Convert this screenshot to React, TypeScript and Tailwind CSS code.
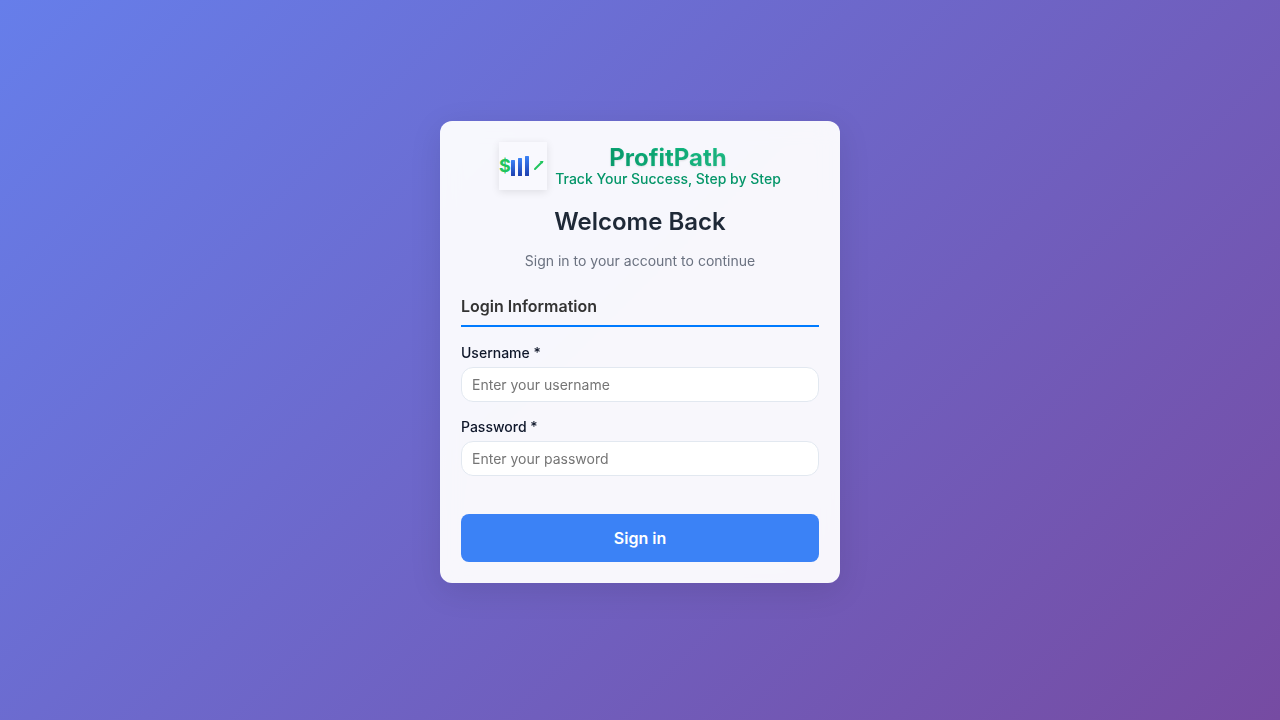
function Logo() {
  return (
    <svg
      className="size-12 shrink-0 shadow-[0_2px_8px_rgba(0,0,0,0.1)]"
      viewBox="0 0 48 48"
      aria-hidden="true"
    >
      <defs>
        <linearGradient id="bar" x1="0" y1="0" x2="0" y2="1">
          <stop offset="0" stopColor="#3b82f6" />
          <stop offset="1" stopColor="#1e40af" />
        </linearGradient>
      </defs>
      <rect width="48" height="48" fill="#f9f9fe" />
      <text x="0" y="30" fontSize="18" fontWeight="700" fill="#22c55e" className="font-['Inter',sans-serif]">
        $
      </text>
      <rect x="12" y="18" width="4" height="16" rx="0.5" fill="url(#bar)" />
      <rect x="19" y="16" width="4" height="18" rx="0.5" fill="url(#bar)" />
      <rect x="26" y="14" width="4" height="20" rx="0.5" fill="url(#bar)" />
      <path d="M36 27 L43 20" stroke="#22c55e" strokeWidth="2" strokeLinecap="round" fill="none" />
      <path d="M40.5 19 L44.5 19 L43.5 21.5 Z" fill="#22c55e" />
    </svg>
  );
}

type FieldProps = {
  id: string;
  label: string;
  type: string;
  placeholder: string;
};

function Field({ id, label, type, placeholder }: FieldProps) {
  return (
    <div className="flex flex-col gap-1">
      <label htmlFor={id} className="text-sm leading-5 font-medium text-[#0f172a]">
        {label} *
      </label>
      <input
        id={id}
        name={id}
        type={type}
        placeholder={placeholder}
        className="h-[35px] w-full rounded-xl border border-[#e2e8f0] bg-white px-2.5 text-sm text-[#0f172a] outline-none placeholder:text-[#757575] focus:border-[#3b82f6]"
      />
    </div>
  );
}

export default function App() {
  return (
    <main className="flex min-h-screen items-center justify-center bg-[linear-gradient(135deg,#667eea_0%,#764ba2_100%)] px-4 pb-4 font-['Inter',sans-serif]">
      <section className="w-full max-w-[400px] rounded-xl bg-white/95 p-[21px] shadow-[0_8px_32px_rgba(0,0,0,0.1)] backdrop-blur-[10px]">
        <header className="flex flex-col items-center text-center">
          <div className="flex items-center gap-2">
            <Logo />
            <div>
              <div className="bg-[linear-gradient(135deg,#059669_0%,#10b981_50%,#34d399_100%)] bg-clip-text text-2xl leading-[26px] font-bold text-transparent [text-shadow:0_1px_2px_rgba(0,0,0,0.1)]">
                ProfitPath
              </div>
              <div className="text-sm leading-4 font-medium text-[#059669]">
                Track Your Success, Step by Step
              </div>
            </div>
          </div>
          <h1 className="mt-4 text-2xl leading-8 font-semibold text-[#1f2937]">Welcome Back</h1>
          <p className="mt-3 text-sm leading-[22px] text-[#6b7280]">Sign in to your account to continue</p>
        </header>
        <form className="mt-[22px]" onSubmit={(event) => event.preventDefault()}>
          <h2 className="border-b-2 border-[#007bff] pb-[7px] text-base leading-6 font-semibold text-[#333333]">
            Login Information
          </h2>
          <div className="mt-4 flex flex-col gap-[15px]">
            <Field id="username" label="Username" type="text" placeholder="Enter your username" />
            <Field id="password" label="Password" type="password" placeholder="Enter your password" />
          </div>
          <button
            type="submit"
            className="mt-[38px] h-12 w-full rounded-lg bg-[#3b82f6] text-base font-semibold text-white"
          >
            Sign in
          </button>
        </form>
      </section>
    </main>
  );
}
